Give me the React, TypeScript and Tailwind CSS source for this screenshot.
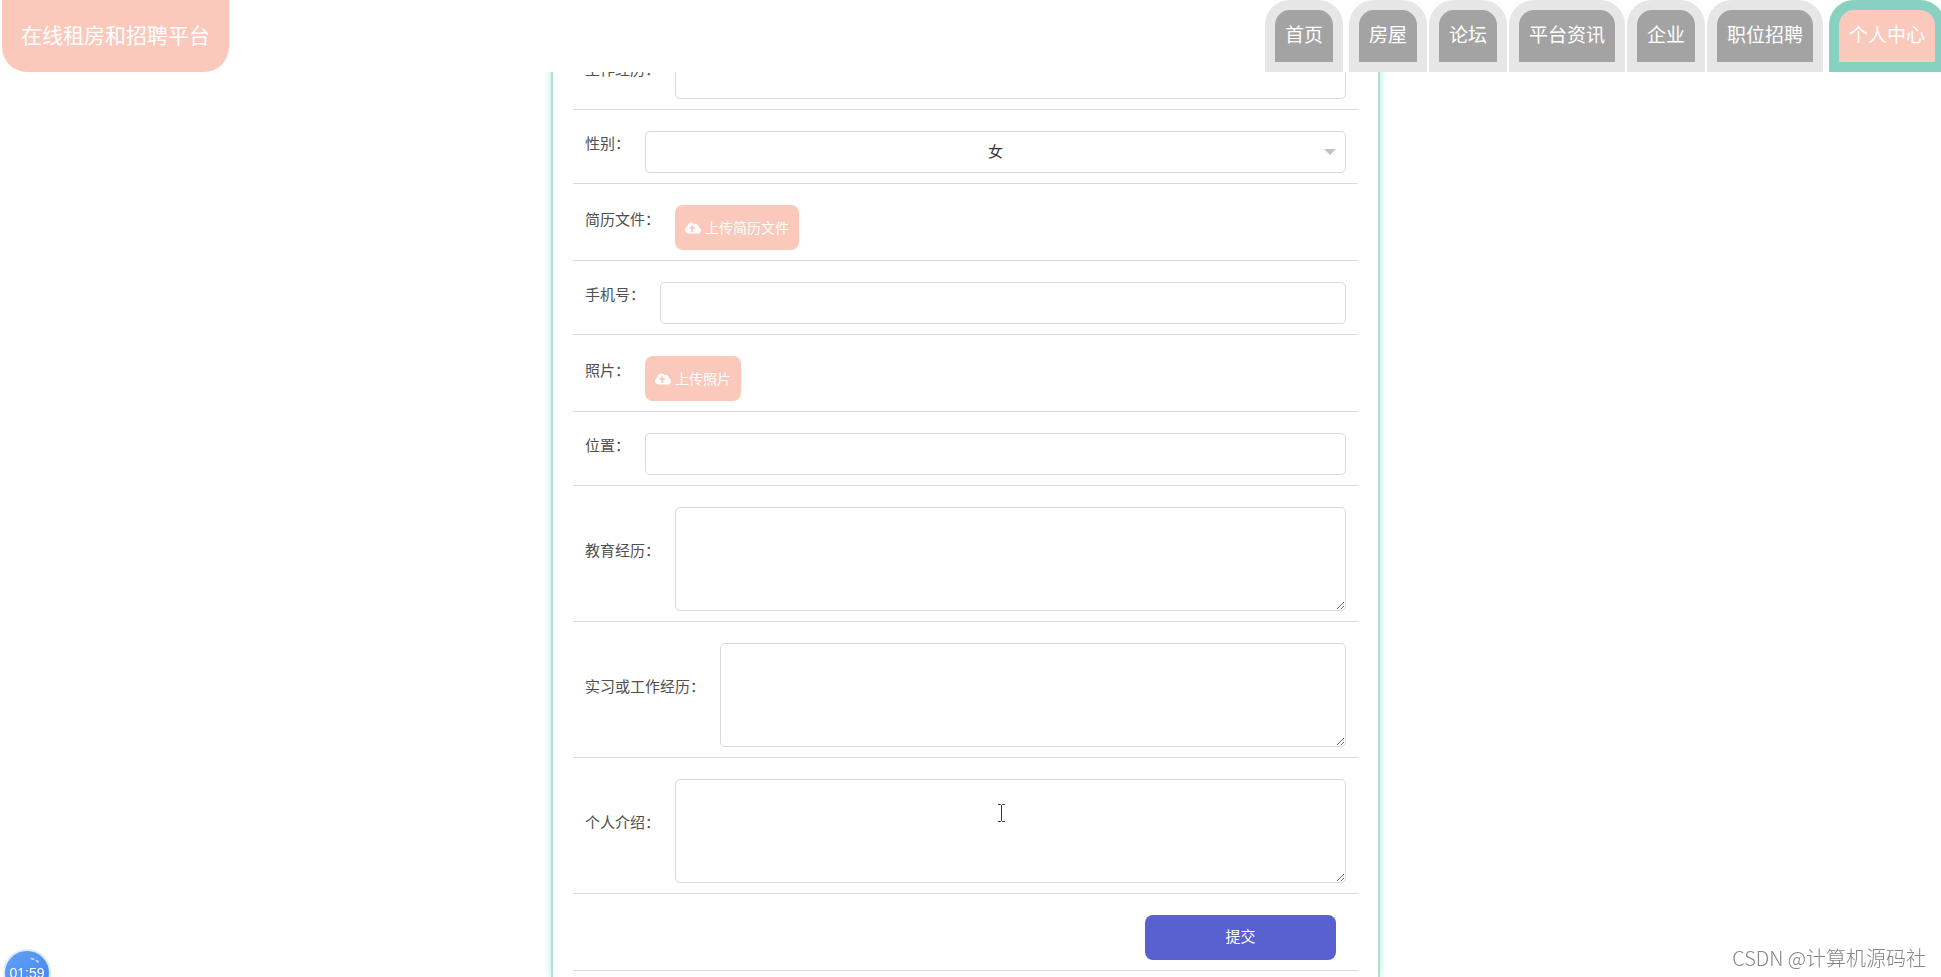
import type { ReactNode } from "react";
import { FaCloudUploadAlt } from "react-icons/fa";

const tabs = [
  { label: "首页", spacing: "mr-1.5" },
  { label: "房屋", spacing: "mr-0.5" },
  { label: "论坛", spacing: "mr-0.5" },
  { label: "平台资讯", spacing: "mr-0.5" },
  { label: "企业", spacing: "mr-0.5" },
  { label: "职位招聘", spacing: "mr-1.5" },
  { label: "个人中心", spacing: "", active: true },
];

const fieldClass =
  "block min-w-0 flex-1 rounded-[5px] border border-[#dcd9d8] bg-white px-3 text-[15px] text-[#333] outline-none";

function Row({ id, label, children }: { id: string; label: string; children: ReactNode }) {
  return (
    <div className="flex items-center gap-[15px] border-b border-[#dcd9d8] px-3 pt-[21px] pb-2.5">
      <label htmlFor={id} className="mb-4 shrink-0 text-[15px] leading-5 text-[#4f4f4f]">
        {label}：
      </label>
      {children}
    </div>
  );
}

function TextRow({ id, label }: { id: string; label: string }) {
  return (
    <Row id={id} label={label}>
      <input id={id} type="text" className={`${fieldClass} h-[42px]`} />
    </Row>
  );
}

function UploadRow({ id, label }: { id: string; label: string }) {
  return (
    <Row id={id} label={label}>
      <button
        id={id}
        type="button"
        className="flex h-[45px] items-center gap-1 rounded-lg bg-[#fbc9bc] px-2.5 text-sm text-white"
      >
        <FaCloudUploadAlt className="size-4" aria-hidden="true" />
        上传{label}
      </button>
    </Row>
  );
}

function AreaRow({ id, label, children }: { id: string; label: string; children?: ReactNode }) {
  return (
    <Row id={id} label={label}>
      <div className="relative flex min-w-0 flex-1">
        <textarea id={id} className={`${fieldClass} h-[104px] resize py-2`} />
        {children}
      </div>
    </Row>
  );
}

export default function App() {
  return (
    <div
      lang="zh-CN"
      className="flex min-h-screen flex-col overflow-hidden bg-white font-['Liberation_Sans','Noto_Sans_CJK_SC',sans-serif]"
    >
      <header className="relative z-10 flex h-[72px] shrink-0 items-stretch justify-between bg-white pl-0.5">
        <a
          href="#home"
          className="flex items-center rounded-b-[25px] bg-[#fbc9bc] px-[19px] text-[21px] whitespace-nowrap text-white"
        >
          在线租房和招聘平台
        </a>
        <nav className="-mr-1 flex">
          {tabs.map((tab) => (
            <a
              key={tab.label}
              href={`#${tab.label}`}
              aria-current={tab.active ? "page" : undefined}
              className={`flex items-center rounded-t-[25px] border-10 px-2.5 text-[19px] whitespace-nowrap ${tab.spacing} ${
                tab.active
                  ? "border-[#88d1c0] bg-[#fbc9bc] text-white"
                  : "border-[#e6e6e6] bg-[#a3a3a3] text-white"
              }`}
            >
              {tab.label}
            </a>
          ))}
        </nav>
      </header>

      <main className="-mt-[36px] flex grow justify-center pr-2.5">
        <form className="w-full max-w-[829px] border-x-2 border-[#b5ddd3] px-5 pb-1.5 shadow-[0_0_7px_#a5f0e0]">
          <TextRow id="work" label="工作经历" />
          <Row id="gender" label="性别">
            <div className="relative flex min-w-0 flex-1">
              <select
                id="gender"
                defaultValue="女"
                className={`${fieldClass} h-[42px] appearance-none text-center`}
              >
                <option>女</option>
                <option>男</option>
              </select>
              <svg
                viewBox="0 0 12 6"
                className="pointer-events-none absolute top-[18px] right-2.5 h-1.5 w-3 fill-[#c2c2c2]"
                aria-hidden="true"
              >
                <path d="M0 0h12L6 6z" />
              </svg>
            </div>
          </Row>
          <UploadRow id="resume" label="简历文件" />
          <TextRow id="phone" label="手机号" />
          <UploadRow id="photo" label="照片" />
          <TextRow id="location" label="位置" />
          <AreaRow id="education" label="教育经历" />
          <AreaRow id="experience" label="实习或工作经历" />
          <AreaRow id="intro" label="个人介绍">
            <svg
              viewBox="0 0 9 18"
              className="pointer-events-none absolute top-[25px] left-[322px] h-[18px] w-[9px] fill-none stroke-[#333]"
              aria-hidden="true"
            >
              <path d="M1 .5h2.5l1 1 1-1H8M4.500 1.500v15M1 17.500h2.500l1-1 1 1H8" />
            </svg>
          </AreaRow>
          <div className="flex justify-end border-b border-[#dcd9d8] px-[22px] pt-[21px] pb-2.5">
            <button type="submit" className="h-[45px] w-[191px] rounded-lg bg-[#5960d0] text-[15px] text-white">
              提交
            </button>
          </div>
        </form>
      </main>

      <div className="fixed -bottom-5 left-[3px] flex size-12 items-center justify-center rounded-full border-2 border-[#d9eefb] bg-linear-to-br from-[#62a0f5] to-[#3f86f2] text-sm text-white">
        01:59
        <svg
          viewBox="0 0 48 48"
          className="absolute inset-0 size-11 fill-none stroke-[#b9d8ff] stroke-2"
          aria-hidden="true"
        >
          <path d="M28 8q6 1 10 6" strokeDasharray="4 2" />
        </svg>
      </div>

      <p className="fixed right-[15px] bottom-1 font-['Noto_Sans_CJK_SC',sans-serif] text-[20px] leading-[30px] font-light text-[#858585]">
        CSDN @计算机源码社
      </p>
    </div>
  );
}
